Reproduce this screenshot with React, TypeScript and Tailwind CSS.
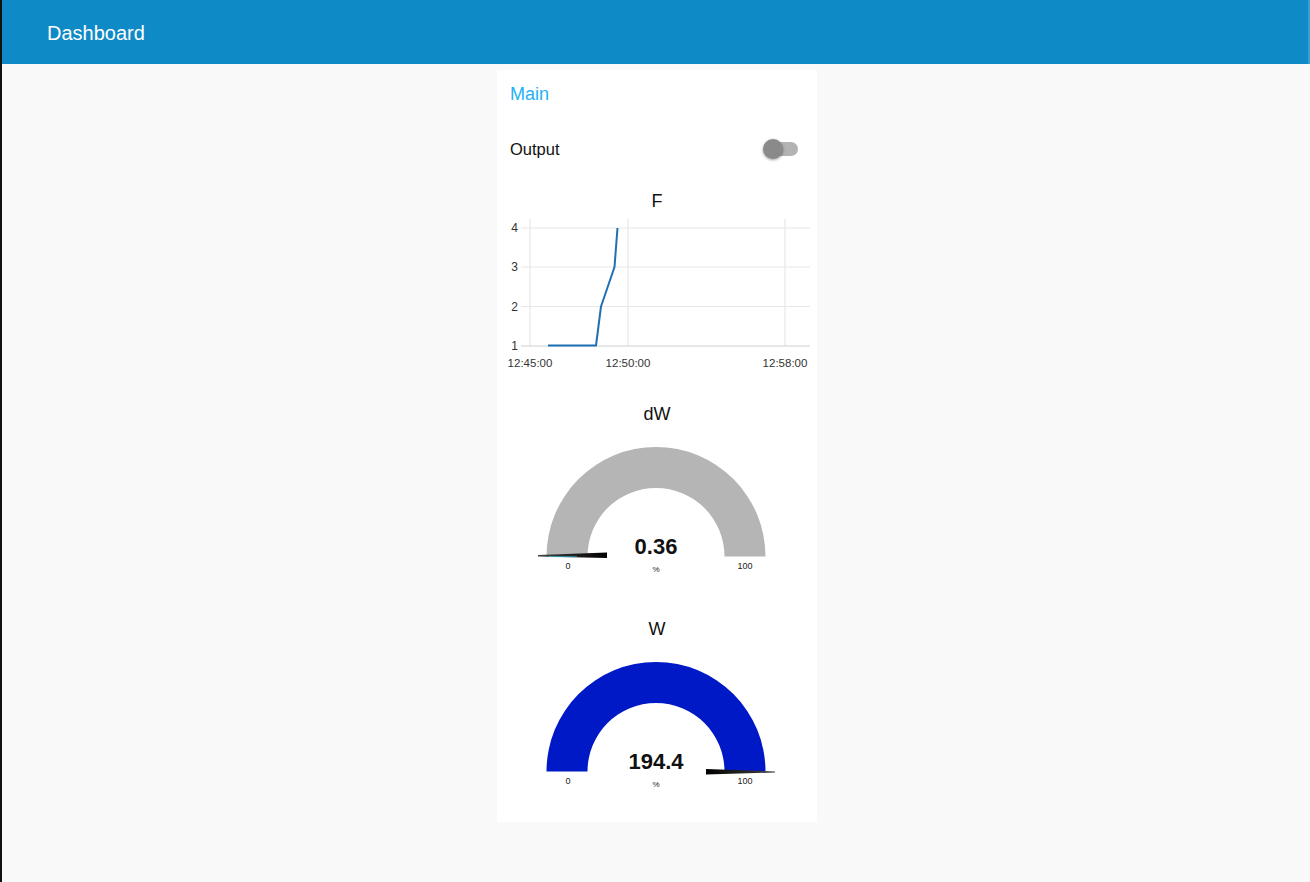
import React from "react";

const sans = { fontFamily: '"Liberation Sans", Arial, sans-serif' };

function Chart() {
  const gy = [11, 50, 89.5, 129];
  const labels = ["4", "3", "2", "1"];
  return (
    <svg width="320" height="160" viewBox="0 0 320 160" className="block">
      {[33, 131, 288].map((x) => (
        <line key={x} x1={x} y1={2} x2={x} y2={129} stroke="#e2e2e2" strokeWidth="1" />
      ))}
      {gy.map((y, i) => (
        <line key={y} x1={24} y1={y} x2={313} y2={y} stroke={i === 3 ? "#cfcfcf" : "#e6e6e6"} strokeWidth="1" />
      ))}
      {gy.map((y, i) => (
        <text key={"l" + y} x={21} y={y + 4} textAnchor="end" fontSize="12" fill="#333" style={sans}>
          {labels[i]}
        </text>
      ))}
      <text x={33} y={150} textAnchor="middle" fontSize="11.5" fill="#333" style={sans}>12:45:00</text>
      <text x={131} y={150} textAnchor="middle" fontSize="11.5" fill="#333" style={sans}>12:50:00</text>
      <text x={288} y={150} textAnchor="middle" fontSize="11.5" fill="#333" style={sans}>12:58:00</text>
      <polyline
        points="51,128.5 99,128.5 104,89.5 117.5,50 120.5,11"
        fill="none"
        stroke="#1f6fb4"
        strokeWidth="2"
        strokeLinejoin="round"
      />
    </svg>
  );
}

function Gauge({
  color,
  value,
  needle,
  id,
}: {
  color: string;
  value: string;
  needle: string;
  id: string;
}) {
  const cx = 159;
  const cy = 126.5;
  const R = 109.5;
  const r = 68.5;
  const d = `M ${cx - R} ${cy} A ${R} ${R} 0 0 1 ${cx + R} ${cy} L ${cx + r} ${cy} A ${r} ${r} 0 0 0 ${cx - r} ${cy} Z`;
  return (
    <svg width="320" height="150" viewBox="0 0 320 150" className="block">
      <defs>
        <linearGradient id={id + "l"} x1="0" x2="1" y1="0" y2="0">
          <stop offset="0" stopColor="#444" />
          <stop offset="1" stopColor="#000" />
        </linearGradient>
        <linearGradient id={id + "r"} x1="1" x2="0" y1="0" y2="0">
          <stop offset="0" stopColor="#444" />
          <stop offset="1" stopColor="#000" />
        </linearGradient>
      </defs>
      <path d={d} fill={color} />
      {id === "dw" ? (
        <>
          <polygon points="41,125 110,122.5 110,128 41,126.5" fill={`url(#${id}l)`} />
          <line x1="52" y1="126.6" x2="80" y2="126.8" stroke="#35b6d6" strokeWidth="0.8" />
        </>
      ) : (
        <polygon points={needle} fill={`url(#${id}r)`} />
      )}
      <text
        x={cx}
        y={124}
        textAnchor="middle"
        fontSize="22"
        fontWeight="bold"
        fill="#111"
        style={sans}
      >
        {value}
      </text>
      <text x={cx} y={142} textAnchor="middle" fontSize="8" fill="#222" style={sans}>
        %
      </text>
      <text x={71} y={139} textAnchor="middle" fontSize="9" fill="#222" style={sans}>
        0
      </text>
      <text x={248} y={139} textAnchor="middle" fontSize="9" fill="#222" style={sans}>
        100
      </text>
    </svg>
  );
}

export default function App() {
  return (
    <div
      className="min-h-[882px] w-full bg-[#f9f9f9] border-l-[2px] border-[#111] flex flex-col"
      style={sans}
    >
      <div className="h-[64px] bg-[#0e8ac6] flex items-center pl-[45px] pt-[2px] shrink-0 border-r-[2px] border-r-[#3a9fd0]">
        <span className="text-white text-[20px]">Dashboard</span>
      </div>
      <div className="flex justify-center pl-[2px]">
        <div className="w-[320px] bg-white mt-[6px] flex flex-col pb-[27px]">
          <div className="h-[48px] px-[13px] flex items-center">
            <span className="text-[18px] text-[#1eb1f4]">Main</span>
          </div>
          <div className="mt-[7px] h-[48px] pl-[13px] pr-[19px] flex items-center justify-between">
            <span className="text-[16.5px] text-[#111]">Output</span>
            <div className="relative w-[35px] h-[20px] flex items-center">
              <div className="absolute left-[6px] right-0 h-[14px] rounded-full bg-[#b3b3b3]" />
              <div className="absolute left-0 top-0 w-[20px] h-[20px] rounded-full bg-[#8a8a8a] shadow-[0_1px_3px_rgba(0,0,0,0.4)]" />
            </div>
          </div>
          <div className="mt-[12px] h-[32px] flex items-center justify-center">
            <span className="text-[18px] text-[#111]">F</span>
          </div>
          <Chart />
          <div className="mt-[21px] h-[32px] flex items-center justify-center">
            <span className="text-[18px] text-[#111]">dW</span>
          </div>
          <Gauge color="#b5b5b5" value="0.36" needle="" id="dw" />
          <div className="mt-[33px] h-[32px] flex items-center justify-center">
            <span className="text-[18px] text-[#111]">W</span>
          </div>
          <Gauge
            color="#0019c6"
            value="194.4"
            needle="209,124 278,126.5 278,127.5 209,129.5"
            id="w"
          />
        </div>
      </div>
    </div>
  );
}
